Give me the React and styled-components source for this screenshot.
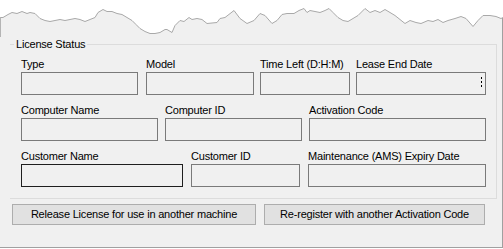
import React from "react";
import styled, { createGlobalStyle } from "styled-components";

const GlobalStyle = createGlobalStyle`
  html, body {
    margin: 0;
    padding: 0;
    background: #ffffff;
  }
  body {
    font-family: "Liberation Sans", Arial, sans-serif;
    font-size: 11px;
    color: #000;
  }
`;

const Page = styled.div`
  width: 503px;
  height: 249px;
  overflow: hidden;
  background: #ffffff;
`;

const TornSvg = styled.svg`
  display: block;
`;

const Window = styled.div`
  box-sizing: border-box;
  width: 503px;
  height: 208px;
  background: #f0f0f0;
  border-right: 1px solid #a0a0a0;
  border-bottom: 1px solid #a0a0a0;
  padding: 4px 0 0 10px;
`;

const GroupBox = styled.div`
  box-sizing: border-box;
  width: 487px;
  border-top: 1px solid #dcdcdc;
  border-right: 1px solid #dcdcdc;
  border-bottom: 1px solid #dcdcdc;
  padding: 0 0 11px 11px;
`;

const Legend = styled.div`
  display: table;
  margin: -7px 0 0 -7px;
  padding: 0 2px;
  background: #f0f0f0;
  line-height: 13px;
  letter-spacing: -0.2px;
`;

const Row = styled.div`
  display: flex;
  margin-top: ${(p) => p.$mt}px;
`;

const Field = styled.div`
  display: flex;
  flex-direction: column;
  width: ${(p) => p.$w}px;
  margin-left: ${(p) => p.$ml || 0}px;
`;

const Label = styled.div`
  line-height: 13px;
  height: 13px;
  white-space: nowrap;
  letter-spacing: -0.2px;
`;

const Box = styled.div`
  box-sizing: border-box;
  height: 23px;
  margin-top: 1px;
  background: #f0f0f0;
  border: 1px solid ${(p) => (p.$focused ? "#1e1e1e" : "#7a7a7a")};
  display: flex;
  justify-content: flex-end;
  align-items: flex-start;
  padding: 4px 3px 0 0;
`;

const ButtonRow = styled.div`
  display: flex;
  gap: 8px;
  margin: 5px 0 0 2px;
`;

const Button = styled.button`
  box-sizing: border-box;
  width: ${(p) => p.$w}px;
  height: 21px;
  padding: 0;
  background: #e1e1e1;
  border: 1px solid #adadad;
  font-family: "Liberation Sans", Arial, sans-serif;
  font-size: 11px;
  letter-spacing: -0.2px;
  color: #000;
  line-height: 19px;
`;

const tornPoints = [
  [0, 17], [3, 17], [8, 14], [12, 12], [17, 13], [22, 11], [27, 13], [30, 12],
  [35, 13], [40, 18], [45, 20], [50, 21], [55, 20], [60, 19], [65, 20], [70, 19],
  [75, 18], [80, 19], [85, 21], [90, 19], [95, 17], [98, 12], [103, 9], [107, 11],
  [112, 11], [117, 13], [122, 14], [127, 17], [132, 20], [136, 24], [140, 28],
  [145, 31], [150, 33], [155, 33], [160, 32], [165, 29], [167, 29], [172, 32],
  [175, 25], [180, 20], [184, 21], [189, 17], [192, 19], [197, 18], [202, 19],
  [207, 23], [217, 22], [220, 18], [225, 17], [234, 10], [240, 18], [247, 23],
  [254, 20], [260, 13], [265, 15], [272, 23], [277, 20], [282, 14], [287, 13],
  [294, 13], [299, 10], [304, 8], [307, 12], [310, 10], [315, 11], [320, 12],
  [325, 10], [329, 8], [333, 12], [338, 17], [343, 20], [348, 21], [353, 18],
  [358, 15], [365, 8], [370, 12], [375, 10], [380, 12], [385, 9], [390, 12],
  [395, 15], [400, 19], [405, 23], [410, 20], [416, 22], [421, 23], [428, 20],
  [433, 21], [438, 19], [443, 22], [448, 20], [455, 18], [461, 16], [466, 18],
  [473, 26], [478, 20], [483, 15], [490, 15], [496, 16], [501, 18], [503, 17],
];

function TornEdge() {
  const line = tornPoints.map(([x, y]) => `${x},${y + 0.5}`).join(" ");
  return (
    <TornSvg width="503" height="40" viewBox="0 0 503 40">
      <polygon points={`${line} 503,40 0,40`} fill="#f0f0f0" />
      <polyline points={line} fill="none" stroke="#a9a9a9" strokeWidth="1" />
      <line x1="0.5" y1="17" x2="0.5" y2="37" stroke="#b4b4b4" />
      <line x1="502.5" y1="18" x2="502.5" y2="40" stroke="#a0a0a0" />
    </TornSvg>
  );
}

function DateDots() {
  return (
    <svg width="1" height="10" viewBox="0 0 1 10">
      <rect x="0" y="0" width="1" height="2" fill="#000" />
      <rect x="0" y="4" width="1" height="2" fill="#000" />
      <rect x="0" y="8" width="1" height="2" fill="#000" />
    </svg>
  );
}

const rows = [
  {
    mt: 7,
    fields: [
      { label: "Type", w: 117 },
      { label: "Model", w: 108, ml: 8 },
      { label: "Time Left (D:H:M)", w: 90, ml: 6 },
      { label: "Lease End Date", w: 130, ml: 6, dots: true },
    ],
  },
  {
    mt: 9,
    fields: [
      { label: "Computer Name", w: 137 },
      { label: "Computer ID", w: 137, ml: 7 },
      { label: "Activation Code", w: 177, ml: 7 },
    ],
  },
  {
    mt: 9,
    fields: [
      { label: "Customer Name", w: 162, focused: true },
      { label: "Customer ID", w: 109, ml: 8 },
      { label: "Maintenance (AMS) Expiry Date", w: 178, ml: 8 },
    ],
  },
];

export default function App() {
  return (
    <Page>
      <GlobalStyle />
      <TornEdge />
      <Window>
        <GroupBox>
          <Legend>License Status</Legend>
          {rows.map((row, i) => (
            <Row key={i} $mt={row.mt}>
              {row.fields.map((f) => (
                <Field key={f.label} $w={f.w} $ml={f.ml}>
                  <Label>{f.label}</Label>
                  <Box $focused={f.focused}>{f.dots && <DateDots />}</Box>
                </Field>
              ))}
            </Row>
          ))}
        </GroupBox>
        <ButtonRow>
          <Button $w={244}>Release License for use in another machine</Button>
          <Button $w={221}>Re-register with another Activation Code</Button>
        </ButtonRow>
      </Window>
    </Page>
  );
}
